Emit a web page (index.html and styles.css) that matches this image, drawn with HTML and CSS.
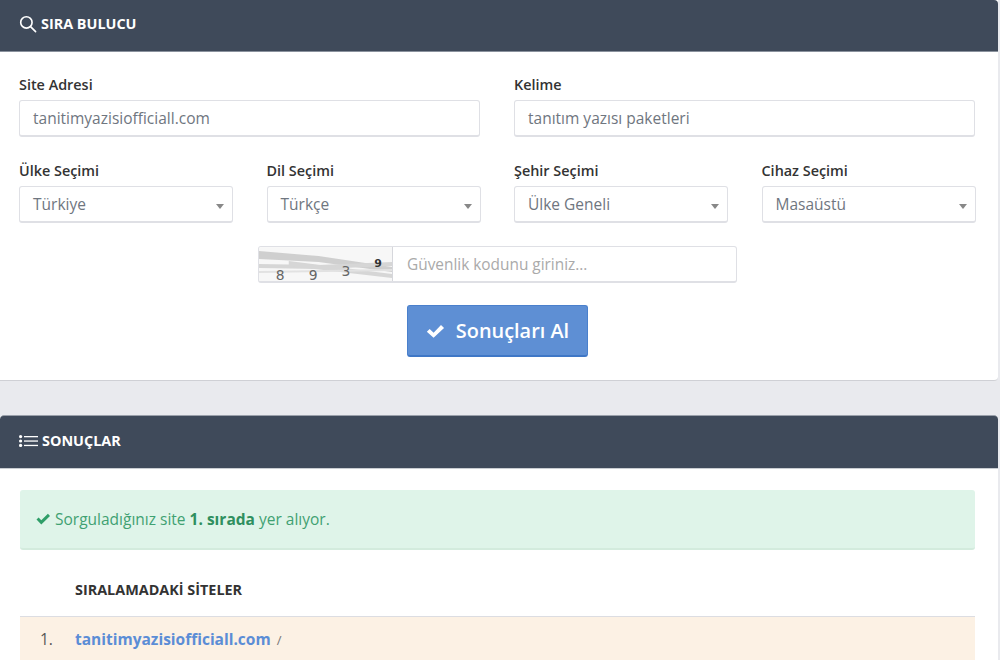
FILE: index.html
```html
<!DOCTYPE html>
<html lang="tr">
<head>
<meta charset="utf-8">
<title>Sıra Bulucu</title>
<link rel="stylesheet" href="styles.css">
</head>
<body>
<div class="page">
  <section class="panel first">
    <header class="head">
      <svg class="ico" width="18" height="18" viewBox="0 0 19 19" fill="none" stroke="#fff" stroke-width="1.7" stroke-linecap="round"><circle cx="7.8" cy="7.8" r="6"/><path d="M12.2 12.2l5.3 5.3"/></svg>
      <h2>SIRA BULUCU</h2>
    </header>
    <form class="body">
      <div class="row two">
        <div class="field"><label>Site Adresi</label><div class="ctl">tanitimyazisiofficiall.com</div></div>
        <div class="field"><label>Kelime</label><div class="ctl">tanıtım yazısı paketleri</div></div>
      </div>
      <div class="row four">
        <div class="field"><label>Ülke Seçimi</label><div class="ctl sel">Türkiye</div></div>
        <div class="field"><label>Dil Seçimi</label><div class="ctl sel">Türkçe</div></div>
        <div class="field"><label>Şehir Seçimi</label><div class="ctl sel">Ülke Geneli</div></div>
        <div class="field"><label>Cihaz Seçimi</label><div class="ctl sel">Masaüstü</div></div>
      </div>
      <div class="captcha">
        <svg class="cap-img" width="134" height="35" viewBox="0 0 134 35">
          <rect width="134" height="35" fill="#f7f7f7"/>
          <path d="M0 4L60 9L134 20L134 25L60 15L0 12Z" fill="#cfcfcf"/>
          <path d="M0 17L60 18L134 15L134 19L60 22L0 21Z" fill="#d6d6d6"/>
          <path d="M30 14L134 27L134 31L30 19Z" fill="#d6d6d6"/>
          <path d="M0 24L134 22L134 24L0 26Z" fill="#e2e2e2"/>
          <text x="17" y="33" class="cap-t">8</text>
          <text x="50" y="33" class="cap-t">9</text>
          <text x="83" y="29" class="cap-t">3</text>
          <text x="116" y="20" class="cap-b">9</text>
        </svg>
        <div class="cap-input">Güvenlik kodunu giriniz...</div>
      </div>
      <div class="actions">
        <button type="button" class="btn">
          <svg width="19" height="16" viewBox="0 0 18 15"><path d="M0.8 8.2L3.5 5.5l3.7 3.7L14.2 1.8l2.9 2.9L7.2 14z" fill="#fff"/></svg>
          Sonuçları Al
        </button>
      </div>
    </form>
  </section>
  <section class="panel second">
    <header class="head">
      <svg class="ico" width="19" height="12" viewBox="0 0 19 12" fill="#fff"><circle cx="1.6" cy="1.6" r="1.6"/><circle cx="1.6" cy="6" r="1.6"/><circle cx="1.6" cy="10.4" r="1.6"/><rect x="5" y="1" width="14" height="1.3"/><rect x="5" y="5.4" width="14" height="1.3"/><rect x="5" y="9.8" width="14" height="1.3"/></svg>
      <h2>SONUÇLAR</h2>
    </header>
    <div class="body results">
      <div class="alert">
        <svg width="15" height="12" viewBox="0 0 15 12"><path d="M0.5 6.6L2.6 4.5l2.7 2.7L11.9.8 14 2.9l-8.7 8.7z" fill="#2f9e68"/></svg>
        <span>Sorguladığınız site <b>1. sırada</b> yer alıyor.</span>
      </div>
      <div class="thead"><span class="num"></span><span>SIRALAMADAKİ SİTELER</span></div>
      <div class="trow"><span class="num">1.</span><span><a href="#">tanitimyazisiofficiall.com</a> <i>/</i></span></div>
    </div>
  </section>
</div>
</body>
</html>
```
FILE: styles.css
```css
* { box-sizing: border-box; }
html, body { margin: 0; height: 660px; overflow: hidden; }
body { background: #e9eaee; font-family: "Open Sans", sans-serif; color: #333; }
.page { width: 1000px; padding-right: 2px; }
.panel { background: #fff; border-radius: 0 0 4px 0; }
.first { height: 381px; border-bottom: 1px solid #cfd0d5; margin-bottom: 34px; }
.second { border-radius: 4px 4px 0 0; height: 245px; overflow: hidden; }
.head { height: 52px; background: #3f4a5a; border-bottom: 1px solid #8a929d; color: #fff; display: flex; align-items: center; gap: 4px; padding: 0 19px 3px; }
.first .head { border-radius: 0 4px 0 0; }
.second .head { height: 54px; border-top: 1px solid #9aa0aa; border-bottom-color: #c9cdd2; border-radius: 4px 4px 0 0; }
.head h2 { margin: 0; font-size: 14.4px; font-weight: 700; line-height: 20px; }
.ico { flex: none; }
.body { padding: 23px 21px 0 19px; display: block; }
.row { display: grid; }
.two { grid-template-columns: 461px 461px; column-gap: 34px; margin-bottom: 24px; }
.four { grid-template-columns: 214px 214px 214px 214px; column-gap: 33.5px; margin-bottom: 23px; }
label { display: block; font-size: 14.4px; font-weight: 600; line-height: 20px; margin-bottom: 5px; color: #333; }
.ctl { height: 37px; border: 1px solid #dfe0e5; border-width: 1px 1px 2px; border-radius: 3px; padding: 0 13px; font-size: 15.5px; line-height: 35px; color: #6f7680; background: #fff; }
.sel { position: relative; }
.sel::after { content: ""; position: absolute; right: 8px; top: 17px; border: 4px solid transparent; border-top: 5px solid #888; border-bottom: 0; }
.captcha { display: flex; width: 479px; height: 37px; margin: 0 0 22px 239px; border: 1px solid #dfe0e5; border-bottom-width: 2px; border-radius: 3px; overflow: hidden; }
.cap-img { flex: none; border-right: 1px solid #d6d7dc; }
.cap-t { font: 14px "DejaVu Sans", sans-serif; fill: #666; }
.cap-b { font: 700 11px "DejaVu Sans", sans-serif; fill: #333; }
.cap-input { flex: 1; padding-left: 14px; font-size: 15.4px; line-height: 35px; color: #aaa; }
.actions { display: flex; justify-content: center; padding-right: 1px; }
.btn { width: 181px; height: 52px; display: flex; align-items: center; justify-content: center; gap: 11px; padding: 0; background: #5e8fd4; border: 1px solid #4a80cc; border-bottom: 2px solid #3f77c6; border-radius: 3px; color: #fff; font: 600 19.9px "Open Sans", sans-serif; }
.results { padding: 21px 23px 0 20px; }
.alert { height: 60px; display: flex; align-items: center; gap: 4px; padding: 0 16px; background: #dff4e9; border-bottom: 2px solid #d3ebdd; border-radius: 3px; color: #3fa172; font-size: 15.5px; }
.alert b { font-weight: 700; color: #2f8f5f; }
.thead { height: 67px; display: flex; align-items: flex-end; padding-bottom: 16px; border-bottom: 1px solid #dcdde2; font-size: 14.4px; font-weight: 700; color: #333; line-height: 20px; }
.num { width: 55px; flex: none; padding-left: 20px; }
.trow { height: 46px; display: flex; align-items: center; padding-bottom: 3px; background: #fcf1e4; font-size: 15.5px; color: #555; }
.trow a { color: #5b8dd6; font-weight: 700; text-decoration: none; }
.trow i { font-style: normal; font-size: 13px; color: #777; margin-left: 2px; }
```
